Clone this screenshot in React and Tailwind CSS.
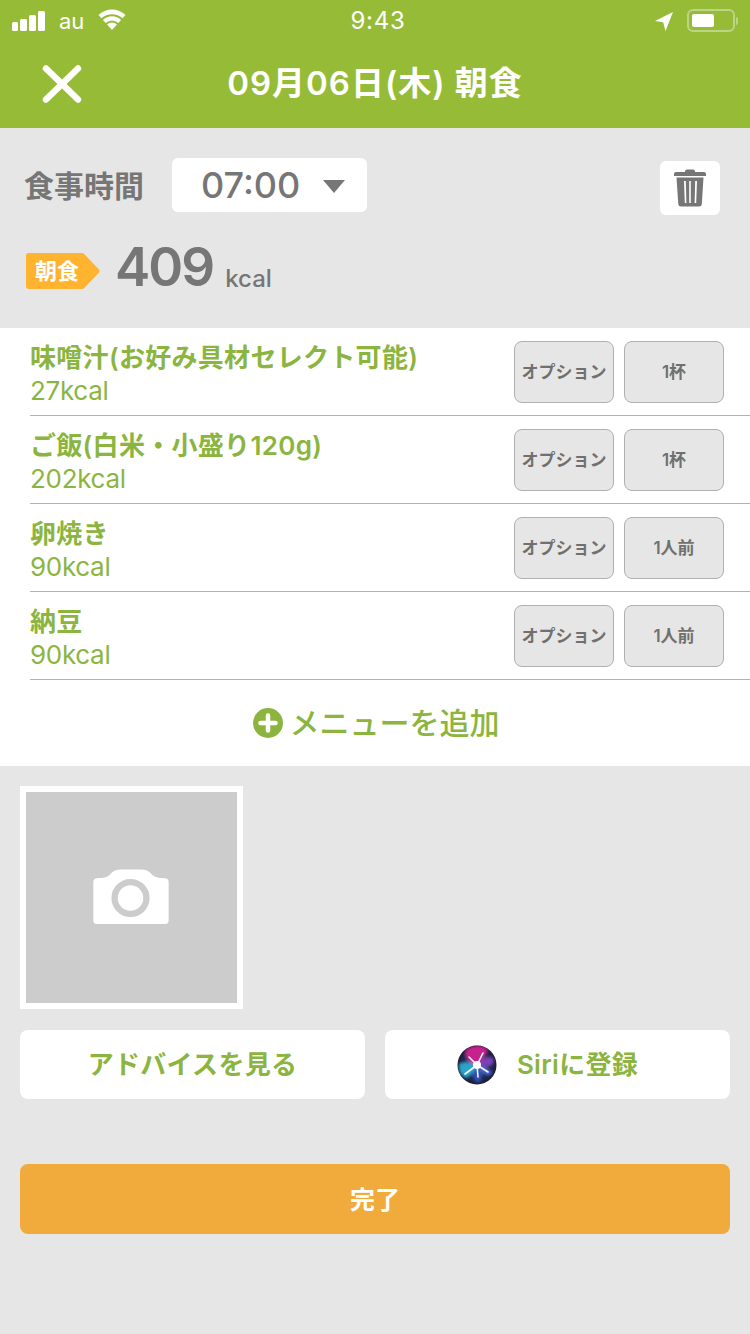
const font = { fontFamily: 'Inter,"Noto Sans CJK JP",sans-serif' };

const items = [
  ["味噌汁(お好み具材セレクト可能)", "27kcal", "1杯"],
  ["ご飯(白米・小盛り120g)", "202kcal", "1杯"],
  ["卵焼き", "90kcal", "1人前"],
  ["納豆", "90kcal", "1人前"],
];

function StatusBar() {
  return (
    <div className="h-10 flex items-center text-white relative shrink-0">
      <div className="flex items-end gap-[2px] ml-3 h-[20px] mt-0.5 w-[33px]">
        <span className="w-[6px] h-[9px] bg-white rounded-[1.5px]" />
        <span className="w-[7px] h-[12px] bg-white rounded-[1.5px]" />
        <span className="w-[7px] h-[16px] bg-white rounded-[1.5px]" />
        <span className="w-[7px] h-[20px] bg-white rounded-[1.5px]" />
      </div>
      <span className="ml-[14px] text-[22px] leading-none font-normal mt-px">au</span>
      <svg className="ml-[13px] mt-[-2px]" width="30" height="21" viewBox="0 0 30 22" fill="white">
        <path d="M15 22l-5.200-5.800a7.400 7.400 0 0 1 10.400 0z" />
        <path d="M8.400 14.600l-2.900-3.200a13.600 13.600 0 0 1 19 0l-2.900 3.200a9.600 9.600 0 0 0-13.200 0z" />
        <path d="M4 9.800L.800 6.300a20.500 20.500 0 0 1 28.400 0L26 9.800a16 16 0 0 0-22 0z" />
      </svg>
      <span className="absolute left-0 right-0 text-center text-[24px] leading-none mt-px pl-[6px] tracking-[0.7px]">9:43</span>
      <div className="ml-auto flex items-center mr-[12px] mt-px">
        <svg width="20" height="20" viewBox="0 0 20 20" fill="white" className="mr-[13px]">
          <path d="M19 1L1 10l8.200 1.200L11.500 20z" />
        </svg>
        <div className="w-[48px] h-[23px] rounded-[6px] border-2 border-[#bcd486] p-[3px]">
          <div className="w-[22px] h-full bg-white rounded-[2px]" />
        </div>
        <span className="w-[2px] h-[8px] bg-[#bcd486] ml-[1px] rounded-r-sm" />
      </div>
    </div>
  );
}

function Row({ name, kcal, unit }) {
  return (
    <div className="h-[88px] ml-[30px] border-b border-[#b3b3b3] flex items-center">
      <div className="flex-1 pt-[5px] text-[#8bb53f]">
        <div className="text-[26px] leading-[30px] font-semibold whitespace-nowrap tracking-[0.3px]">{name}</div>
        <div className="text-[26px] leading-[30px] mt-[3px] tracking-[-0.3px]">{kcal}</div>
      </div>
      <div className="flex gap-[10px] mr-[26px] mt-px">
        {["オプション", unit].map((t, i) => (
          <div key={i} className="w-[100px] h-[62px] rounded-lg border border-[#b0b0b0] bg-[#e6e6e6] flex items-center justify-center text-[17px] font-semibold text-[#707070] pt-px">{t}</div>
        ))}
      </div>
    </div>
  );
}

function Siri() {
  return (
    <svg width="40" height="40" viewBox="0 0 40 40">
      <defs>
        <radialGradient id="sb" cx="50%" cy="50%" r="50%">
          <stop offset="0%" stopColor="#6f8fd0" />
          <stop offset="70%" stopColor="#1d2a55" />
          <stop offset="100%" stopColor="#1f1c34" />
        </radialGradient>
        <filter id="bl" x="-20%" y="-20%" width="140%" height="140%"><feGaussianBlur stdDeviation="1.600" /></filter>
        <filter id="bs" x="-20%" y="-20%" width="140%" height="140%"><feGaussianBlur stdDeviation="0.600" /></filter>
        <clipPath id="sc"><circle cx="20" cy="20" r="19.500" /></clipPath>
      </defs>
      <circle cx="20" cy="20" r="19.500" fill="url(#sb)" />
      <g filter="url(#bl)" clipPath="url(#sc)">
        <path d="M20 20C9 16 5 9 10 4 17 -1 27 0 31 5 28 12 24 16 20 20z" fill="#c6218c" />
        <path d="M20 20C26 14 31 10 36 13 39 20 32 24 20 20z" fill="#7b3fb5" />
        <path d="M20 20C12 17 6 16 2 19 1 27 5 32 10 33 14 30 18 26 20 20z" fill="#2aa5c8" />
        <path d="M20 20C23 26 26 32 23 37 16 38 14 30 20 20z" fill="#2f4fc0" />
        <path d="M20 20C27 22 33 24 35 28 31 33 26 29 20 20z" fill="#4a62d8" />
      </g>
      <g stroke="white" strokeLinecap="round" filter="url(#bs)" strokeWidth="1.600" opacity="0.95">
        <path d="M20 20L8 29M20 20L26 8M20 20L31 27M20 20L12 12M20 20L21 32" />
      </g>
      <circle cx="20" cy="20" r="4" fill="white" filter="url(#bs)" />
    </svg>
  );
}

export default function App() {
  return (
    <div className="w-[750px] h-[1334px] bg-[#e6e6e6] flex flex-col overflow-hidden" style={font}>
      <header className="h-[128px] bg-[#96bc37] shrink-0 flex flex-col relative">
        <StatusBar />
        <div className="flex-1 flex items-center justify-center relative">
          <svg className="absolute left-[42px] top-[25px]" width="40" height="38" viewBox="0 0 40 38" fill="none" stroke="white" strokeWidth="6.500" strokeLinecap="round">
            <path d="M4 3.500L36 34.500M36 3.500L4 34.500" />
          </svg>
          <h1 className="text-[33px] leading-none text-white font-semibold mb-px tracking-[1px]">09月06日(木) 朝食</h1>
        </div>
      </header>

      <section className="h-[200px] shrink-0 px-[25px] pt-[30px]">
        <div className="flex items-start">
          <div className="text-[30px] leading-[56px] font-semibold text-[#767676] w-[147px] whitespace-nowrap ml-[-1px] mr-px">食事時間</div>
          <div className="w-[195px] h-[54px] bg-white rounded-md flex items-center pl-[29px] text-[#767676]">
            <span className="text-[36px] font-medium leading-none">07:00</span>
            <svg className="ml-[22px] mt-0.5" width="24" height="15" viewBox="0 0 24 15" fill="#767676"><path d="M1 1h22L12 14z" /></svg>
          </div>
          <div className="ml-auto mr-[5px] mt-[3px] w-[60px] h-[54px] bg-white rounded-md flex items-center justify-center">
            <svg width="34" height="38" viewBox="0 0 34 38" fill="#767676">
              <path d="M12 2.500a2 2 0 0 1 2-2h6a2 2 0 0 1 2 2V3h9a2 2 0 0 1 2 2v2H1V5a2 2 0 0 1 2-2h9z" />
              <path fillRule="evenodd" d="M3.500 8.500h27l-1.700 26.700a2.700 2.700 0 0 1-2.700 2.300H8a2.700 2.700 0 0 1-2.700-2.300zM11 12l.8 22h1.600l-.6-22zM16.200 12v22h1.600V12zM22.200 12l-.6 22h1.600l.8-22z" />
            </svg>
          </div>
        </div>
        <div className="flex items-end mt-[26px] text-[#767676]">
          <div className="relative w-[73px] h-[36px] mb-[5px] ml-px">
            <svg className="absolute inset-0" width="74" height="36" viewBox="0 0 74 36" fill="#ffb32e">
              <path d="M3 0h53a3 3 0 0 1 2.400 1.200L73 16.500a2.500 2.500 0 0 1 0 3L58.400 34.800A3 3 0 0 1 56 36H3a3 3 0 0 1-3-3V3a3 3 0 0 1 3-3z" />
            </svg>
            <span className="absolute left-[9px] top-0 leading-[36px] text-[22px] font-semibold text-white whitespace-nowrap">朝食</span>
          </div>
          <span className="ml-[16px] text-[53px] font-semibold leading-none tracking-[-2px]">409</span>
          <span className="ml-[12px] text-[24px] font-medium leading-none mb-[3px]">kcal</span>
        </div>
      </section>

      <section className="h-[438px] bg-white shrink-0">
        {items.map(([n, k, u]) => <Row key={n} name={n} kcal={k} unit={u} />)}
        <div className="h-[86px] flex items-center justify-center gap-[7px] text-[#8bb53f] pl-[2px]">
          <svg width="30" height="30" viewBox="0 0 30 30">
            <circle cx="15" cy="15" r="15" fill="#8bb53f" />
            <path d="M15 7.500v15M7.500 15h15" stroke="white" strokeWidth="4.500" strokeLinecap="round" />
          </svg>
          <span className="text-[30px] leading-none font-medium">メニューを追加</span>
        </div>
      </section>

      <section className="px-5 pt-5">
        <div className="w-[223px] h-[223px] border-[6px] border-white bg-[#cccccc] flex items-center justify-center">
          <svg width="76" height="56" viewBox="0 0 78 58" className="mt-[-1px] mr-[1px]">
            <path fill="white" d="M4 9.500c8 0 11-1 14-4.500C21 1.500 24 .5 28 .5h22c4 0 7 1 10 4.500 3 3.500 6 4.500 14 4.500a4 4 0 0 1 4 4V53a4 4 0 0 1-4 4H4a4 4 0 0 1-4-4V13.500a4 4 0 0 1 4-4z" />
            <circle cx="38.500" cy="30" r="16.500" fill="white" stroke="#cccccc" strokeWidth="6.500" />
          </svg>
        </div>
        <div className="flex gap-5 mt-[21px]">
          <div className="w-[345px] h-[69px] bg-white rounded-lg flex items-center justify-center text-[26px] font-semibold text-[#8bb53f] tracking-[0.3px]">アドバイスを見る</div>
          <div className="w-[345px] h-[69px] bg-white rounded-lg flex items-center justify-center gap-[20px] pr-5 text-[26px] font-semibold text-[#8bb53f] tracking-[0.3px]">
            <Siri />
            <span>Siriに登録</span>
          </div>
        </div>
        <div className="mt-[65px] h-[70px] bg-[#f0ab3c] rounded-lg flex items-center justify-center text-[25px] font-semibold text-white pt-[3px]">完了</div>
      </section>
    </div>
  );
}
